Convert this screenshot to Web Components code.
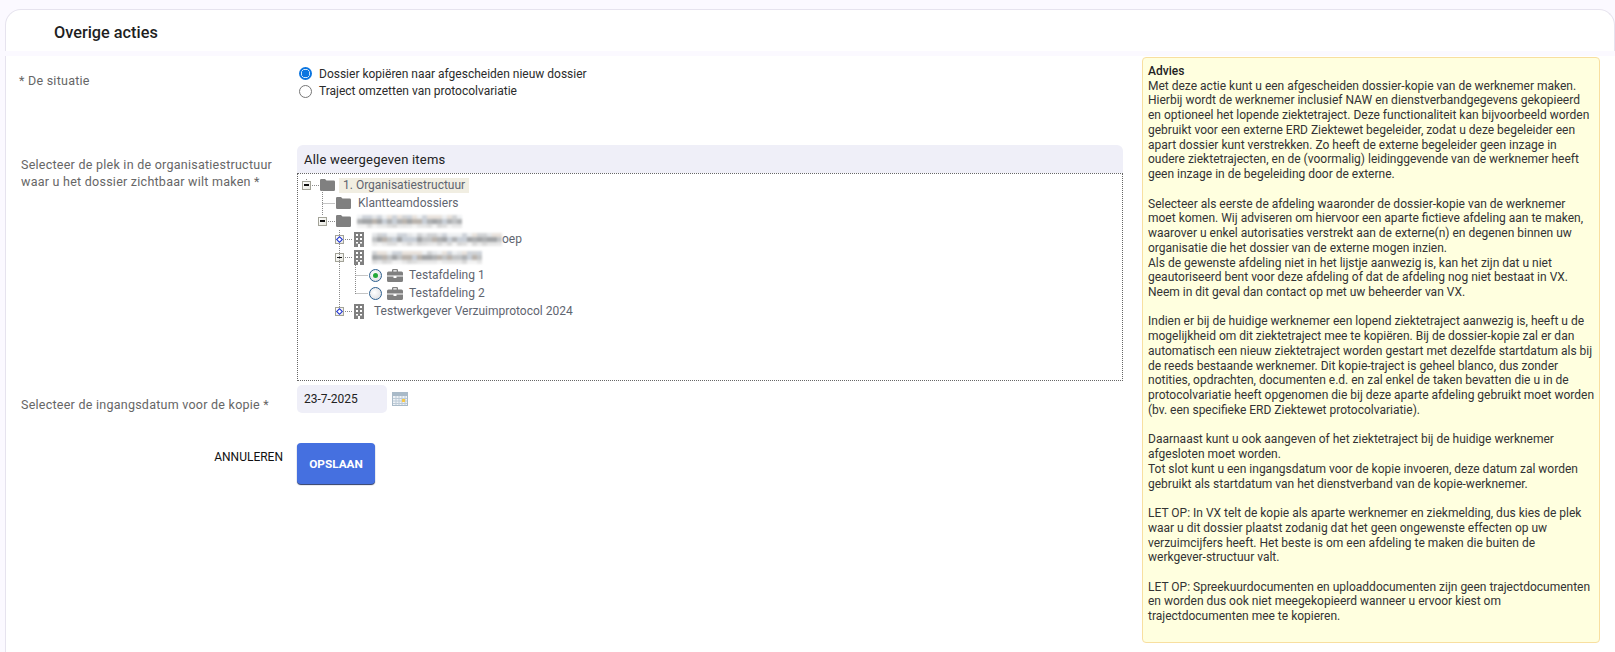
<!DOCTYPE html>
<html lang="nl">
<head>
<meta charset="utf-8">
<title>Overige acties</title>
<style>
	html, body { margin: 0; height: 652px; overflow: hidden; background: #fbf9ff; font-family: Roboto, "Liberation Sans", sans-serif; }
</style>
</head>
<body>
<action-page>
	<form-row label="* De situatie" style="--row-h:86px;--label-top:17px;--label-left:13px">
		<radio-option checked>Dossier kopiëren naar afgescheiden nieuw dossier</radio-option>
		<radio-option>Traject omzetten van protocolvariatie</radio-option>
	</form-row>
	<form-row label="Selecteer de plek in de organisatiestructuur waar u het dossier zichtbaar wilt maken *" style="--row-h:240px;--label-top:15px;--label-left:15px">
		<org-tree></org-tree>
	</form-row>
	<form-row label="Selecteer de ingangsdatum voor de kopie *" style="--row-h:58px;--label-top:15px;--label-left:15px">
		<date-field value="23-7-2025"></date-field>
	</form-row>
	<form-actions></form-actions>
	<advice-box slot="side">
		<b>Advies</b><br>
		Met deze actie kunt u een afgescheiden dossier-kopie van de werknemer maken. Hierbij wordt de werknemer inclusief NAW en dienstverbandgegevens gekopieerd en optioneel het lopende ziektetraject. Deze functionaliteit kan bijvoorbeeld worden gebruikt voor een externe ERD Ziektewet begeleider, zodat u deze begeleider een apart dossier kunt verstrekken. Zo heeft de externe begeleider geen inzage in oudere ziektetrajecten, en de (voormalig) leidinggevende van de werknemer heeft geen inzage in de begeleiding door de externe.<br><br>
		Selecteer als eerste de afdeling waaronder de dossier-kopie van de werknemer moet komen. Wij adviseren om hiervoor een aparte fictieve afdeling aan te maken, waarover u enkel autorisaties verstrekt aan de externe(n) en degenen binnen uw organisatie die het dossier van de externe mogen inzien.<br>
		Als de gewenste afdeling niet in het lijstje aanwezig is, kan het zijn dat u niet geautoriseerd bent voor deze afdeling of dat de afdeling nog niet bestaat in VX. Neem in dit geval dan contact op met uw beheerder van VX.<br><br>
		Indien er bij de huidige werknemer een lopend ziektetraject aanwezig is, heeft u de mogelijkheid om dit ziektetraject mee te kopiëren. Bij de dossier-kopie zal er dan automatisch een nieuw ziektetraject worden gestart met dezelfde startdatum als bij de reeds bestaande werknemer. Dit kopie-traject is geheel blanco, dus zonder notities, opdrachten, documenten e.d. en zal enkel de taken bevatten die u in de protocolvariatie heeft opgenomen die bij deze aparte afdeling gebruikt moet worden (bv. een specifieke ERD Ziektewet protocolvariatie).<br><br>
		Daarnaast kunt u ook aangeven of het ziektetraject bij de huidige werknemer afgesloten moet worden.<br>
		Tot slot kunt u een ingangsdatum voor de kopie invoeren, deze datum zal worden gebruikt als startdatum van het dienstverband van de kopie-werknemer.<br><br>
		LET OP: In VX telt de kopie als aparte werknemer en ziekmelding, dus kies de plek waar u dit dossier plaatst zodanig dat het geen ongewenste effecten op uw verzuimcijfers heeft. Het beste is om een afdeling te maken die buiten de werkgever-structuur valt.<br><br>
		LET OP: Spreekuurdocumenten en uploaddocumenten zijn geen trajectdocumenten en worden dus ook niet meegekopieerd wanneer u ervoor kiest om trajectdocumenten mee te kopieren.
	</advice-box>
</action-page>

<script>
'use strict'

class ActionPage extends HTMLElement {
	constructor() {
		super()
		this.attachShadow({ mode: 'open' }).innerHTML = `
			<style>
				:host { display: block; padding: 9px 0 0 5px; }
				header {
					height: 37px;
					padding: 4px 0 0 48px;
					display: flex;
					align-items: center;
					background: #fff;
					border: 1px solid #e6e3ee;
					border-bottom: 0;
					border-radius: 16px 16px 0 0;
					font-size: 16.3px;
					font-weight: 500;
					color: #1f1f1f;
				}
				.gap { height: 5px; }
				main {
					height: 596px;
					display: grid;
					grid-template-columns: 1136px 458px;
					background: #fff;
					border-left: 1px solid #e6e3ee;
				}
				.form { min-width: 0; }
			</style>
			<header>Overige acties</header>
			<div class="gap"></div>
			<main>
				<div class="form"><slot></slot></div>
				<div><slot name="side"></slot></div>
			</main>`
	}
}

class FormRow extends HTMLElement {
	constructor() {
		super()
		this.attachShadow({ mode: 'open' }).innerHTML = `
			<style>
				:host { display: grid; grid-template-columns: 291px 826px; height: var(--row-h); }
				.label {
					padding: var(--label-top) 8px 0 var(--label-left);
					font-size: 12.5px;
					line-height: 16.5px;
					letter-spacing: .25px;
					color: #666;
				}
				.field { padding-top: 9px; }
			</style>
			<div class="label"></div>
			<div class="field"><slot></slot></div>`
	}

	connectedCallback() {
		this.shadowRoot.querySelector('.label').textContent = this.getAttribute('label')
	}
}

class RadioOption extends HTMLElement {
	constructor() {
		super()
		this.attachShadow({ mode: 'open' }).innerHTML = `
			<style>
				:host { display: flex; align-items: center; gap: 7px; height: 17.5px; font-size: 12px; color: #2b2b2b; padding-left: 2px; }
				i { width: 11px; height: 11px; border: 1px solid #767676; border-radius: 50%; background: #fff; box-sizing: content-box; }
				:host([checked]) i { border: 2px solid #0b75e0; width: 9px; height: 9px; background: radial-gradient(circle, #0b75e0 0 3.6px, #fff 4.1px); }
			</style>
			<i></i><span><slot></slot></span>`
	}
}

const GLYPHS = {
	folder: '<svg width="15" height="12" viewBox="0 0 15 12"><path fill="#808080" d="M0 1.2Q0 0 1.2 0H5l1.5 1.6h7.3Q15 1.6 15 2.8v8Q15 12 13.8 12H1.2Q0 12 0 10.8z"/></svg>',
	building: '<svg width="12" height="15" viewBox="0 0 12 15"><path fill="#808080" fill-rule="evenodd" d="M1 0h10v15H7v-3H5v3H1zM3 2v2h2V2zm4 0v2h2V2zM3 6v2h2V6zm4 0v2h2V6zM3 10v1.500h2V10zm4 0v1.500h2V10z"/></svg>',
	case: '<svg width="16" height="13" viewBox="0 0 16 13"><path fill="#808080" fill-rule="evenodd" d="M5 2.500V1.200Q5 0 6.200 0h3.600Q11 0 11 1.200v1.300h3.500Q16 2.500 16 4v2.500H0V4q0-1.500 1.500-1.500zM6.300 1.300v1.200h3.400V1.300zM0 7.500h6.500v1.500h3V7.500H16v4Q16 13 14.500 13h-13Q0 13 0 11.500z"/></svg>'
}

class TreeRow extends HTMLElement {
	constructor() {
		super()
		this.attachShadow({ mode: 'open' }).innerHTML = `
			<style>
				:host { display: flex; align-items: center; height: 18.1px; font-size: 12px; color: #5f6570; white-space: nowrap; }
				.exp {
					width: 7px; height: 7px; margin-right: 9px; flex: none;
					border: 1px solid #a3a398; background: linear-gradient(135deg, #fff, #e8e8e0);
					display: flex; align-items: center; justify-content: center;
				}
				.minus { width: 5px; height: 1.500px; background: #111; }
				.plus { width: 3px; height: 3px; border: 1px solid #1a2fd0; background: #fff; transform: rotate(45deg); }
				.radio {
					width: 11px; height: 11px; flex: none; margin-right: 5px;
					border: 1px solid #2c5f8f; border-radius: 50%;
					background: radial-gradient(circle at 40% 40%, #fff, #d6d8dc);
					display: flex; align-items: center; justify-content: center;
				}
				.radio b { width: 5px; height: 5px; border-radius: 50%; background: #22a838; }
				.icon { display: flex; flex: none; }
				.text { padding: 0 4px; line-height: 15px; }
				:host([selected]) .text { background: #f1eee2; }
			</style>
			<span class="lead"></span><span class="icon"></span><span class="text"><slot></slot></span>`
	}

	connectedCallback() {
		const lead = this.shadowRoot.querySelector('.lead')
		lead.style.display = 'contents'
		const exp = this.getAttribute('exp')
		if (exp) {
			lead.innerHTML = `<span class="exp"><span class="${exp}"></span></span>`
		} else if (this.hasAttribute('radio')) {
			lead.innerHTML = `<span class="radio">${this.getAttribute('radio') === 'on' ? '<b></b>' : ''}</span>`
		}
		const icon = this.shadowRoot.querySelector('.icon')
		icon.innerHTML = GLYPHS[this.getAttribute('icon')]
		icon.style.marginRight = (this.getAttribute('gap') || 2) + 'px'
		this.style.marginLeft = this.getAttribute('indent') + 'px'
	}
}

// pixelated name, the original is blurred out in the screenshot
class MosaicText extends HTMLElement {
	constructor() {
		super()
		this.attachShadow({ mode: 'open' }).innerHTML = `
			<style>
				:host { display: inline-grid; grid-auto-flow: column; grid-template-rows: 4px 5px 4px; vertical-align: middle; filter: blur(1px); }
				i { width: 5px; }
			</style>`
	}

	connectedCallback() {
		const width = Number(this.getAttribute('cells'))
		const tones = [
			['#e4e6e8', '#d2d4d6', '#e8e2dc', '#eef0f2', '#cfd4da'],
			['#b0b2b4', '#c2c4c6', '#a4a6a8', '#c8ced6', '#bab4ae'],
			['#e8e8e8', '#dedede', '#f2f2f2', '#d8d8d8', '#e6e6e6']
		]
		let seed = Number(this.getAttribute('seed') || 3)
		for (let i = 0; i < width * 3; i++) {
			seed = (seed * 137 + 59) % 1009
			const cell = document.createElement('i')
			cell.style.background = tones[i % 3][(seed >> 3) % 5]
			this.shadowRoot.appendChild(cell)
		}
	}
}

class OrgTree extends HTMLElement {
	constructor() {
		super()
		this.attachShadow({ mode: 'open' }).innerHTML = `
			<style>
				:host { display: block; width: 826px; margin-top: -6px; }
				.head {
					height: 28px; padding-left: 7px; display: flex; align-items: center;
					background: #efeff8; border-radius: 6px 6px 0 0;
					font-size: 13px; color: #222; letter-spacing: .2px;
				}
				.box {
					position: relative; height: 208px; box-sizing: border-box;
					border: 1px dotted #666; padding: 2px 0 0 0;
				}
				svg.lines { position: absolute; left: -1px; top: -1px; }
				svg.lines path { stroke: #8a8a8a; stroke-width: 1; stroke-dasharray: 1 1; fill: none; }
			</style>
			<div class="head">Alle weergegeven items</div>
			<div class="box">
				<svg class="lines" width="826" height="208">
					<path d="M9.500 6v2M15 12.500h7M25.500 17v26M25.500 30.500H38M31 48.500h7M42.500 57v77M48 66.500h7M48 84.500h7M48 138.500h7M58.500 90v31M58.500 102.500H71M58.500 120.500H71"/>
				</svg>
				<tree-row indent="4" exp="minus" icon="folder" gap="4" selected>1. Organisatiestructuur</tree-row>
				<tree-row indent="38" icon="folder" gap="3">Klantteamdossiers</tree-row>
				<tree-row indent="20" exp="minus" icon="folder" gap="2"><mosaic-text cells="21"></mosaic-text></tree-row>
				<tree-row indent="37" exp="plus" icon="building" gap="3"><mosaic-text cells="26" seed="9"></mosaic-text>oep</tree-row>
				<tree-row indent="37" exp="minus" icon="building" gap="3"><mosaic-text cells="22" seed="14"></mosaic-text></tree-row>
				<tree-row indent="71" radio="on" icon="case" gap="2">Testafdeling 1</tree-row>
				<tree-row indent="71" radio="off" icon="case" gap="2">Testafdeling 2</tree-row>
				<tree-row indent="37" exp="plus" icon="building" gap="5">Testwerkgever Verzuimprotocol 2024</tree-row>
			</div>`
	}
}

class DateField extends HTMLElement {
	constructor() {
		super()
		this.attachShadow({ mode: 'open' }).innerHTML = `
			<style>
				:host { display: flex; align-items: center; gap: 5px; margin-top: -6px; }
				.value {
					width: 83px; height: 28px; padding-left: 7px; border-radius: 5px;
					background: #efeff8; display: flex; align-items: center;
					font-size: 12px; color: #222;
				}
				svg { margin-top: -1px; }
			</style>
			<div class="value"></div>
			<svg width="16" height="14" viewBox="0 0 16 14">
				<rect x=".5" y=".5" width="15" height="13" fill="#eef2f6" stroke="#a9bac8"/>
				<rect x="1" y="1" width="14" height="3" fill="#a9bac8"/>
				<path stroke="#bccad6" fill="none" d="M1 6.500h14M1 9h14M1 11.500h14M4 4v9M7 4v9M10 4v9M13 4v9"/>
				<rect x="10" y="7" width="3" height="3" fill="#f7c948"/>
			</svg>`
	}

	connectedCallback() {
		this.shadowRoot.querySelector('.value').textContent = this.getAttribute('value')
	}
}

class FormActions extends HTMLElement {
	constructor() {
		super()
		this.attachShadow({ mode: 'open' }).innerHTML = `
			<style>
				:host { display: grid; grid-template-columns: 291px auto; margin-top: 3px; }
				.cancel { justify-self: end; padding: 7px 14px 0 0; font-size: 12px; color: #111; }
				button {
					width: 78px; height: 41px; padding: 0; border: 0; border-radius: 4px;
					background: #4570e0; color: #fff;
					font: 700 11.800px Roboto, sans-serif;
					box-shadow: 0 1px 1px #2b3a66;
				}
			</style>
			<span class="cancel">ANNULEREN</span>
			<div><button>OPSLAAN</button></div>`
	}
}

class AdviceBox extends HTMLElement {
	constructor() {
		super()
		this.attachShadow({ mode: 'open' }).innerHTML = `
			<style>
				:host {
					display: block; box-sizing: border-box; width: 458px; height: 586px; margin-top: 1px;
					padding: 6px 5px 6px 5px; border: 1px solid #f8dfa0; border-radius: 4px;
					background: #ffffdf; font-size: 12px; line-height: 14.73px; color: #333;
				}
				::slotted(b) { font-weight: 500; color: #222; }
			</style>
			<slot></slot>`
	}
}

customElements.define('action-page', ActionPage)
customElements.define('form-row', FormRow)
customElements.define('radio-option', RadioOption)
customElements.define('tree-row', TreeRow)
customElements.define('mosaic-text', MosaicText)
customElements.define('org-tree', OrgTree)
customElements.define('date-field', DateField)
customElements.define('form-actions', FormActions)
customElements.define('advice-box', AdviceBox)
</script>
</body>
</html>
